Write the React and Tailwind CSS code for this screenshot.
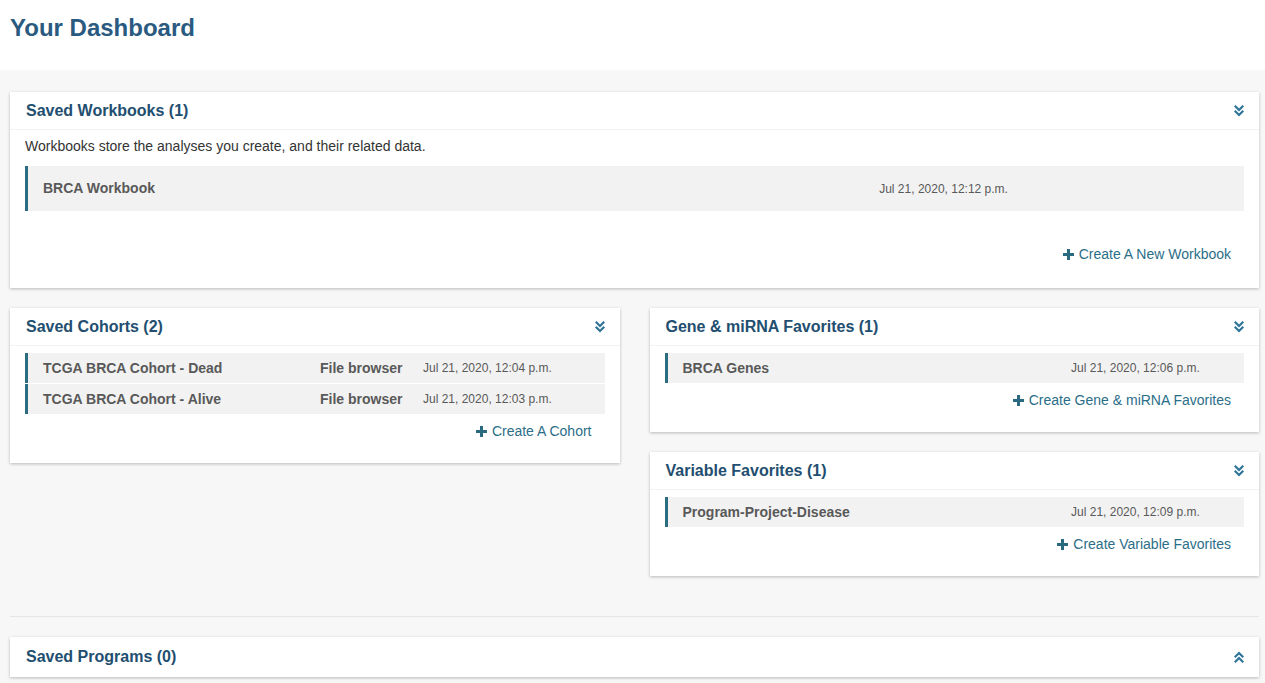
import React from "react";

const ACCENT = "text-[#2b6e88]";

const DoubleChevron = ({ up = false }) => (
  <svg
    viewBox="0 0 10 12"
    className={`h-[12px] w-[10px] ${up ? "rotate-180" : ""}`}
    fill="none"
    stroke="#2f7599"
    strokeWidth="2.2"
    strokeLinecap="square"
  >
    <polyline points="1.5,1.5 5,5 8.5,1.5" />
    <polyline points="1.5,6.5 5,10 8.5,6.5" />
  </svg>
);

const PlusIcon = () => (
  <svg viewBox="0 0 11 11" className="h-[11px] w-[11px]" fill="#2a6a80">
    <rect x="4" y="0" width="3" height="11" />
    <rect x="0" y="4" width="11" height="3" />
  </svg>
);

const CardHeader = ({ title, up = false, className = "h-[38px] border-b border-[#f2f2f2]" }) => (
  <div className={`flex items-center justify-between pl-[16px] pr-[15px] ${className}`}>
    <h2 className="text-[16px] font-bold text-[#224e6f]">{title}</h2>
    <DoubleChevron up={up} />
  </div>
);

const Card = ({ children }) => (
  <div className="bg-white shadow-[0_1px_3px_rgba(0,0,0,0.25)]">{children}</div>
);

const CreateLink = ({ label, className = "mt-[7px]" }) => (
  <div className={`flex justify-end pr-[13px] ${className}`}>
    <a className={`flex items-center gap-[5px] text-[14px] leading-[20px] ${ACCENT}`}>
      <PlusIcon />
      {label}
    </a>
  </div>
);

const Row = ({ name, source, date, tall = false }) => (
  <div
    className={`flex items-center border-l-[3px] border-[#2a6d82] bg-[#f2f2f2] text-[#595959] ${
      tall ? "h-[45px]" : "h-[30px]"
    }`}
  >
    {source ? (
      <>
        <div className="w-[292px] pl-[15px] text-[14px] font-bold">{name}</div>
        <div className="w-[103px] text-[14px] font-bold">{source}</div>
        <div className="text-[12px]">{date}</div>
      </>
    ) : (
      <>
        <div className="w-[70%] pl-[15px] text-[14px] font-bold">{name}</div>
        <div className="text-[12px]">{date}</div>
      </>
    )}
  </div>
);

export default function App() {
  return (
    <div className="min-h-screen bg-[#f7f7f7] font-['Liberation_Sans',Arial,sans-serif]">
      <div className="h-[70px] bg-white px-[10px] pt-[15px]">
        <h1 className="text-[24px] font-bold leading-[26px] text-[#2a5a80]">Your Dashboard</h1>
      </div>

      <div className="pl-[10px] pr-[6px] pt-[22px]">
        <Card>
          <CardHeader title="Saved Workbooks (1)" />
          <div className="px-[15px] pb-[24px] pt-[6px]">
            <p className="text-[14px] leading-[20px] text-[#333333]">
              Workbooks store the analyses you create, and their related data.
            </p>
            <div className="mt-[10px]">
              <Row tall name="BRCA Workbook" date="Jul 21, 2020, 12:12 p.m." />
            </div>
            <CreateLink label="Create A New Workbook" className="mt-[33px]" />
          </div>
        </Card>

        <div className="mt-[20px] grid grid-cols-2 items-start gap-[30px]">
          <Card>
            <CardHeader title="Saved Cohorts (2)" />
            <div className="px-[15px] pb-[22px] pt-[7px]">
              <div className="flex flex-col gap-[1px]">
                <Row name="TCGA BRCA Cohort - Dead" source="File browser" date="Jul 21, 2020, 12:04 p.m." />
                <Row name="TCGA BRCA Cohort - Alive" source="File browser" date="Jul 21, 2020, 12:03 p.m." />
              </div>
              <CreateLink label="Create A Cohort" />
            </div>
          </Card>

          <div className="flex flex-col gap-[20px]">
            <Card>
              <CardHeader title="Gene & miRNA Favorites (1)" />
              <div className="px-[15px] pb-[22px] pt-[7px]">
                <Row name="BRCA Genes" date="Jul 21, 2020, 12:06 p.m." />
                <CreateLink label="Create Gene & miRNA Favorites" />
              </div>
            </Card>
            <Card>
              <CardHeader title="Variable Favorites (1)" />
              <div className="px-[15px] pb-[22px] pt-[7px]">
                <Row name="Program-Project-Disease" date="Jul 21, 2020, 12:09 p.m." />
                <CreateLink label="Create Variable Favorites" />
              </div>
            </Card>
          </div>
        </div>

        <div className="mt-[40px] border-t border-[#e6e6e6]" />

        <div className="mt-[20px]">
          <Card>
            <CardHeader title="Saved Programs (0)" up className="h-[40px]" />
          </Card>
        </div>
      </div>
    </div>
  );
}
